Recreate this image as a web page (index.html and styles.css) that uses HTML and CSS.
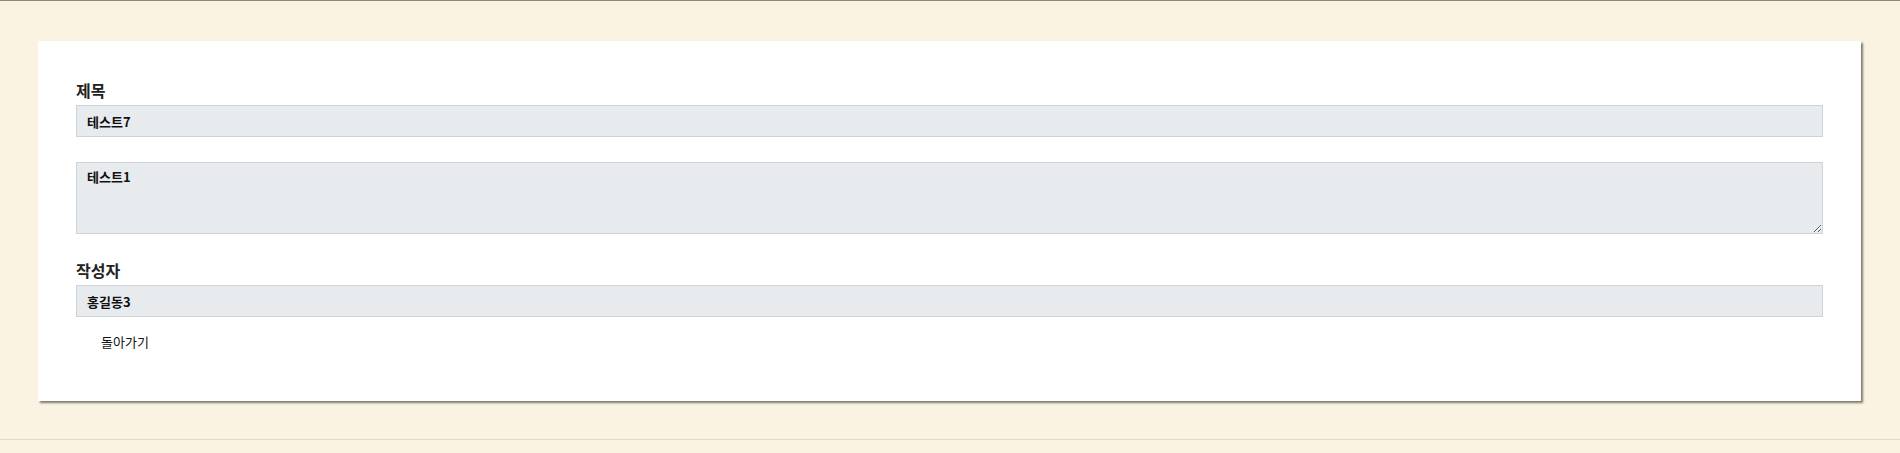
FILE: index.html
```html
<!DOCTYPE html>
<html lang="ko">
<head>
<meta charset="utf-8">
<title>게시글 상세</title>
<link rel="stylesheet" href="styles.css">
</head>
<body>
<div class="topline"></div>
<main class="page">
  <section class="card">
    <div class="field">
      <label class="label">제목</label>
      <input class="input" type="text" value="테스트7" readonly>
    </div>
    <div class="field field-content">
      <textarea class="textarea" readonly>테스트1</textarea>
    </div>
    <div class="field">
      <label class="label">작성자</label>
      <input class="input" type="text" value="홍길동3" readonly>
    </div>
    <div class="actions">
      <button class="back" type="button">돌아가기</button>
    </div>
  </section>
</main>
<footer class="footer"></footer>
</body>
</html>
```
FILE: styles.css
```css
html, body {
  margin: 0;
  padding: 0;
}
body {
  background: #faf3e1;
  font-family: "Noto Sans CJK KR", "Noto Sans", sans-serif;
  color: #212529;
  height: 453px;
}
.topline {
  height: 1px;
  background: #8c8780;
}
.page {
  padding: 40px 39px 0 38px;
}
.card {
  background: #ffffff;
  box-shadow: 2px 2px 2px rgba(0, 0, 0, 0.5);
  height: 360px;
  box-sizing: border-box;
  padding: 39px 38px 0 38px;
}
.field {
  display: flex;
  flex-direction: column;
}
.label {
  font-size: 16px;
  line-height: 20px;
  font-weight: 700;
  color: #222;
  margin-bottom: 5px;
}
.input, .textarea {
  box-sizing: border-box;
  width: 100%;
  background: #e8ebee;
  border: 1px solid #ced3d9;
  font-family: "Noto Sans CJK KR", "Noto Sans", sans-serif;
  font-size: 13px;
  font-weight: 700;
  color: #111;
  padding: 0 10px;
  margin: 0;
  outline: none;
  border-radius: 0;
}
.input {
  height: 32px;
}
.textarea {
  height: 72px;
  padding-top: 5px;
  line-height: 18px;
  resize: vertical;
  display: block;
}
.field-content {
  margin-top: 25px;
  margin-bottom: 26px;
}
.actions {
  margin-top: 11px;
}
.back {
  background: transparent;
  border: none;
  font-family: "Noto Sans CJK KR", "Noto Sans", sans-serif;
  font-size: 13px;
  color: #111;
  padding: 4px 25px;
  cursor: pointer;
}
.footer {
  margin-top: 38px;
  border-top: 1px solid #dedbd4;
}
```
